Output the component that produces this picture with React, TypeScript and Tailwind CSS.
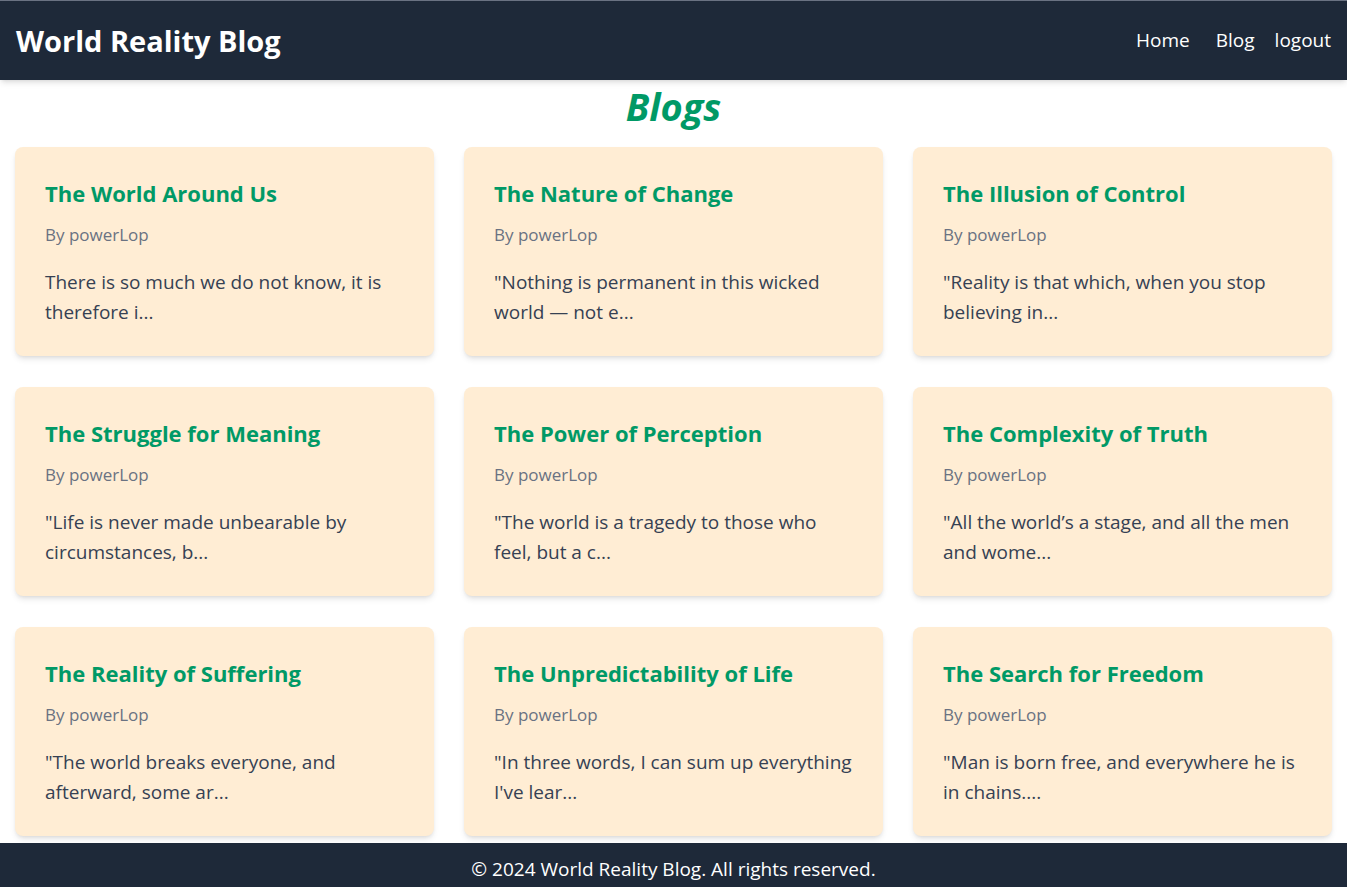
const posts = [
  { title: 'The World Around Us', excerpt: 'There is so much we do not know, it is therefore i...' },
  { title: 'The Nature of Change', excerpt: '"Nothing is permanent in this wicked world — not e...' },
  { title: 'The Illusion of Control', excerpt: '"Reality is that which, when you stop believing in...' },
  { title: 'The Struggle for Meaning', excerpt: '"Life is never made unbearable by circumstances, b...' },
  { title: 'The Power of Perception', excerpt: '"The world is a tragedy to those who feel, but a c...' },
  { title: 'The Complexity of Truth', excerpt: '"All the world’s a stage, and all the men and wome...' },
  { title: 'The Reality of Suffering', excerpt: '"The world breaks everyone, and afterward, some ar...' },
  { title: 'The Unpredictability of Life', excerpt: '"In three words, I can sum up everything I\'ve lear...' },
  { title: 'The Search for Freedom', excerpt: '"Man is born free, and everywhere he is in chains....' },
];

const BlogCard = ({ title, excerpt }: { title: string; excerpt: string }) => {
  return (
    <div className="rounded-lg bg-orange-100 px-[30px] pt-[30px] pb-[29px] shadow-md">
      <h2 className="text-[22px] leading-8 font-bold text-emerald-600">{title}</h2>
      <p className="mt-[14px] text-[17px] leading-6 text-gray-500">By powerLop</p>
      <p className="mt-5 text-[19px] leading-[30px] text-gray-700">{excerpt}</p>
    </div>
  );
};

export default function App() {
  return (
    <div className="flex min-h-screen flex-col bg-white font-['Open_Sans',sans-serif]">
      <header className="flex h-20 items-center justify-between border-t border-gray-500 bg-gray-800 px-4 shadow-md">
        <h1 className="text-[29px] font-bold text-white">World Reality Blog</h1>
        <nav className="flex items-center gap-5 text-[19px] text-white">
          <a href="#" className="mr-1.5">Home</a>
          <a href="#">Blog</a>
          <a href="#">logout</a>
        </nav>
      </header>

      <main className="flex-1">
        <h1 className="mt-1 text-center text-[38px] leading-[44px] font-bold italic text-emerald-600">Blogs</h1>
        <div className="grid grid-cols-3 gap-x-[30px] gap-y-[31px] px-[15px] pt-[19px] pb-[7px]">
          {posts.map((post) => (
            <BlogCard key={post.title} title={post.title} excerpt={post.excerpt} />
          ))}
        </div>
      </main>

      <footer className="bg-gray-800 py-3 text-center text-[19px] leading-7 text-white">
        © 2024 World Reality Blog. All rights reserved.
      </footer>
    </div>
  );
}
